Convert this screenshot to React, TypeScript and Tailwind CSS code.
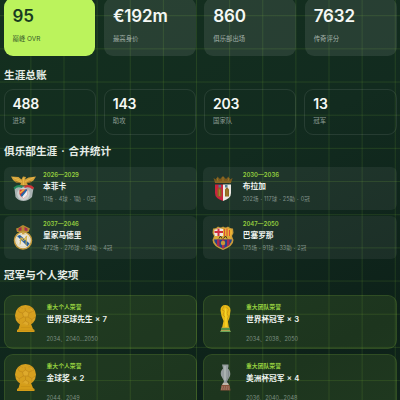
import type { ReactNode } from "react";

const zh = "font-['Inter','Noto_Sans_CJK_SC',sans-serif]";

function Benfica() {
  return (
    <svg viewBox="0 0 50 50" className="h-[25px] w-[25px]">
      <path d="M0 1 L15 2 L21 7 L24 1 L30 2 L28 7 L35 3 L50 1 L45 9 L38 13 L32 14 L34 19 L18 19 L20 14 L10 13 L4 8Z" fill="#d3a13a" />
      <path d="M4 3 L17 8 L22 12 M46 3 L34 8 L28 12 M25 4 L25 18 M11 9 L20 12" stroke="#e6b64a" strokeWidth="2" fill="none" />
      <path d="M9 11 L19 14 M40 11 L31 14" stroke="#80591e" strokeWidth="1.5" />
      <path d="M7 25 Q13 18 25 21 Q39 17 45 24 L42 42 Q34 50 25 50 Q15 50 9 42Z" fill="#a9b2b2" />
      <path d="M5 23 Q15 15 24 20 L22 24 Q13 20 7 27Z" fill="#25885a" />
      <path d="M27 20 Q38 15 46 23 L43 27 Q36 20 27 24Z" fill="#cc3338" />
      <circle cx="25" cy="36" r="12.5" fill="#cdd0cf" />
      <path d="M17 27 H33 V36 Q32 41 25 45 Q18 41 17 36Z" fill="#d8383b" />
      <path d="M33 27 V36 Q32 41 25 45 L21 41Z" fill="#eee" />
      <path d="M19 38 L30 26 L33 28 L22 42Z" fill="#2567a4" />
      <path d="M18 34 L26 27" stroke="#e9b73b" strokeWidth="3" />
    </svg>
  );
}

function Braga() {
  return (
    <svg viewBox="0 0 40 50" className="h-[25px] w-5">
      <path d="M1 4 L6 7 L9 1 L14 6 L20 0 L26 6 L31 1 L34 7 L39 4 L36 14 H4Z" fill="#79591d" />
      <path d="M4 12 H36 M8 4 L10 10 M20 2 V10 M32 4 L30 10" stroke="#987427" strokeWidth="2" />
      <path d="M4 17 H20 V50 Q4 45 4 34Z" fill="#cb233d" />
      <path d="M20 17 H36 V34 Q36 45 20 50Z" fill="#eceae4" />
      <path d="M9 27 L13 22 L17 27 V41 H9Z M24 27 L28 22 L32 27 V41 H24Z" fill="#8e6820" />
      <path d="M13 27 V40 M28 27 V40" stroke="#a98232" strokeWidth="2" />
      <path d="M11 18 h5 v5 h-5z M24 18 h5 v5 h-5z" fill="#517d91" />
    </svg>
  );
}

function Madrid() {
  return (
    <svg viewBox="0 0 40 50" className="h-[25px] w-5">
      <path d="M8 14 L6 7 L12 5 L16 2 L20 0 L24 2 L30 5 L34 7 L31 14Z" fill="#b48a30" />
      <path d="M11 7 L17 4 V11 L11 12Z M23 4 L29 7 V12 L23 11Z" fill="#a72c4f" />
      <circle cx="20" cy="31" r="17" fill="#e9e5d8" stroke="#c49b3d" strokeWidth="3" />
      <circle cx="20" cy="31" r="13" fill="none" stroke="#dcc88d" strokeWidth="1" />
      <path d="M8 22 L14 20 L33 37 L29 43Z" fill="#265f9e" />
      <path d="M14 39 L16 25 L21 32 L27 22 L26 40 M13 31 Q21 23 28 31" fill="none" stroke="#d5b345" strokeWidth="2" />
      <path d="M18 17 H23" stroke="#d1a33b" strokeWidth="3" />
    </svg>
  );
}

function Barcelona() {
  return (
    <svg viewBox="0 0 44 48" className="h-6 w-[22px]">
      <path d="M2 5 Q8 6 12 1 Q18 5 22 1 Q27 5 32 1 Q37 6 42 5 L43 14 L40 20 L43 28 Q43 40 22 48 Q1 40 1 28 L4 20 L1 14Z" fill="#c99b39" />
      <path d="M5 7 Q9 8 13 4 L22 6 V20 H6 L4 14Z" fill="#eee6df" />
      <path d="M13 5 V20 M5 12 H22" stroke="#d02f3f" strokeWidth="4" />
      <path d="M22 6 L31 4 Q35 8 39 7 L40 14 L38 20 H22Z" fill="#efbb32" />
      <path d="M25 6 V20 M30 5 V20 M35 8 V20" stroke="#d5503b" strokeWidth="2.4" />
      <path d="M5 20 H39 V26 H4Z" fill="#d9a936" />
      <path d="M14 25 L17 20 L20 25 M23 25 L27 20 L30 25" stroke="#343320" strokeWidth="2" fill="none" />
      <path d="M4 27 H40 Q39 38 22 45 Q5 38 4 27Z" fill="#25438c" />
      <path d="M10 27 H15 V42 L10 39Z M20 27 H25 V44 L22 45 L20 44Z M30 27 H35 V38 L30 41Z" fill="#ae294c" />
      <circle cx="22" cy="34" r="4.5" fill="#c7993a" />
    </svg>
  );
}

function GoldenBall() {
  return (
    <svg viewBox="0 0 42 54" className="h-[27px] w-[21px]">
      <path d="M10 38 H32 L36 48 L39 50 V54 H4 V50 L7 48Z" fill="#d59d18" />
      <path d="M5 51 H38 M12 45 H31" stroke="#c08a15" strokeWidth="1" />
      <circle cx="21" cy="21" r="21" fill="#d6a01f" />
      <path d="M15 16 L21 12 L28 16 L26 24 H17Z M6 9 L12 5 L15 8 M27 6 L34 6 L38 14 M3 25 L8 29 L8 36 M34 36 L34 29 L40 24 M15 36 L21 32 L28 36 L26 41" fill="#deaa2c" stroke="#ba8318" strokeWidth="1.2" />
      <path d="M15 16 L8 14 L6 9 M21 12 L20 6 M28 16 L35 13 M26 24 L34 29 M17 24 L8 29 M21 32 V25" stroke="#ba8318" strokeWidth="1.2" fill="none" />
    </svg>
  );
}

function WorldCup() {
  return (
    <svg viewBox="0 0 22 54" className="h-[27px] w-[11px]">
      <path d="M1 11 Q1 0 11 0 Q21 1 21 11 L19 25 L16 33 L18 46 H4 L7 32 L3 22Z" fill="#e8bb16" />
      <path d="M8 2 L4 10 L9 12 L6 20 L13 27 M13 4 L17 9 L14 17 L17 23 L12 34" stroke="#c59512" strokeWidth="1.5" fill="none" />
      <path d="M11 7 L11 15 L12 26 V44" stroke="#f6d629" strokeWidth="3" fill="none" />
      <path d="M3 45 H19 L21 54 H1Z" fill="#b0a551" />
      <path d="M2 48 H20" stroke="#358a46" strokeWidth="3" />
      <path d="M1 53 H21" stroke="#69a75a" strokeWidth="2" />
    </svg>
  );
}

function CopaCup() {
  return (
    <svg viewBox="0 0 22 54" className="h-[27px] w-[11px]">
      <path d="M4 1 H17 V5 L16 9 Q22 14 20 24 L14 35 L16 40 H6 L8 34 L2 23 Q0 14 6 9Z" fill="#959d9e" />
      <path d="M10 4 V33" stroke="#aab2b1" strokeWidth="4" />
      <path d="M17 13 V25 L12 36" stroke="#7c8687" strokeWidth="1.5" fill="none" />
      <path d="M6 38 H16 L18 42 H4Z" fill="#c0b6a8" />
      <path d="M3 42 H19 L21 53 H1Z" fill="#88523b" />
      <path d="M3 46 H19 M2 50 H20" stroke="#b8a293" strokeWidth="1.5" strokeDasharray="3 1.5" />
    </svg>
  );
}

const peaks = [
  { value: "95", label: "巅峰 OVR", active: true },
  { value: "€192m", label: "最高身价" },
  { value: "860", label: "俱乐部出场" },
  { value: "7632", label: "传奇评分" },
];

const totals = [
  { value: "488", label: "进球" },
  { value: "143", label: "助攻" },
  { value: "203", label: "国家队" },
  { value: "13", label: "冠军" },
];

const clubs = [
  { years: "2026—2029", name: "本菲卡", stats: "11场 · 4球 · 1助 · 0冠", crest: <Benfica /> },
  { years: "2030—2036", name: "布拉加", stats: "202场 · 117球 · 25助 · 0冠", crest: <Braga /> },
  { years: "2037—2046", name: "皇家马德里", stats: "472场 · 276球 · 84助 · 4冠", crest: <Madrid /> },
  { years: "2047—2050", name: "巴塞罗那", stats: "175场 · 91球 · 33助 · 2冠", crest: <Barcelona /> },
];

const awards = [
  { kind: "重大个人荣誉", name: "世界足球先生 × 7", years: "2034、2040…2050", icon: <GoldenBall /> },
  { kind: "重大团队荣誉", name: "世界杯冠军 × 3", years: "2034、2038、2050", icon: <WorldCup /> },
  { kind: "重大个人荣誉", name: "金球奖 × 2", years: "2044、2049", icon: <GoldenBall /> },
  { kind: "重大团队荣誉", name: "美洲杯冠军 × 4", years: "2036、2040…2048", icon: <CopaCup /> },
];

function Title({ children }: { children: ReactNode }) {
  return <h2 className="pl-[0.5px] text-[10.65px] leading-[16px] font-semibold text-[#e6ede8] [word-spacing:1.3px]">{children}</h2>;
}

export default function App() {
  return (
    <div className={`${zh} h-[400px] w-[400px] overflow-hidden whitespace-nowrap bg-[linear-gradient(155deg,#14301f_0%,#122b1f_45%,#0d2119_85%,#0f241a_100%)] text-[#f5f8f5]`}>
      <div className="flex h-full flex-col bg-[linear-gradient(90deg,rgba(120,180,50,0.17)_1.2px,transparent_1.2px),linear-gradient(rgba(120,180,50,0.17)_1.2px,transparent_1.2px)] bg-[length:33.14px_33.18px] bg-[position:30.4px_15.2px] px-[3.5px]">
        <div className="-mt-[2px] grid shrink-0 grid-cols-4 gap-[8.5px]">
          {peaks.map((p) => (
            <div
              key={p.label}
              className={`h-[58px] rounded-[9px] pt-[9px] pl-[9px] ${p.active ? "bg-[#bbf35c] text-[#183a21]" : "bg-white/9"}`}
            >
              <div className="text-[17px] leading-[19px] font-semibold tracking-[-0.15px]">{p.value}</div>
              <div className={`mt-[8px] text-[6.4px] leading-[10px] ${p.active ? "text-[#34572a]" : "text-[#a5b2ab]"}`}>{p.label}</div>
            </div>
          ))}
        </div>
        <div className="mt-[12px]">
          <Title>生涯总账</Title>
        </div>
        <div className="mt-[5px] grid shrink-0 grid-cols-4 gap-[8px]">
          {totals.map((t) => (
            <div key={t.label} className="h-[46px] rounded-[9px] border border-white/9 pt-[6px] pl-[8px]">
              <div className="text-[14px] leading-[15px] font-semibold tracking-[-0.25px]">{t.value}</div>
              <div className="mt-[5px] text-[6.4px] leading-[10px] text-[#8d9d94]">{t.label}</div>
            </div>
          ))}
        </div>
        <div className="mt-[9px]">
          <Title>俱乐部生涯 · 合并统计</Title>
        </div>
        <div className="mt-[7px] grid shrink-0 grid-cols-2 gap-x-[6.5px] gap-y-[6px]">
          {clubs.map((c) => (
            <div key={c.name} className="flex h-[43px] rounded-[6px] bg-white/6">
              <div className="flex w-[39.5px] items-center justify-center">{c.crest}</div>
              <div className="pt-[4px]">
                <div className="text-[5.9px] leading-[8px] font-semibold text-[#95cf3f]">{c.years}</div>
                <div className="mt-[1px] text-[7.7px] leading-[13px] font-bold text-[#eef3ef]">{c.name}</div>
                <div className="mt-[2px] text-[5.5px] leading-[8px] text-[#83938b] [word-spacing:0.5px]">{c.stats}</div>
              </div>
            </div>
          ))}
        </div>
        <div className="mt-[9px]">
          <Title>冠军与个人奖项</Title>
        </div>
        <div className="mt-[11px] grid shrink-0 grid-cols-2 gap-x-[6px] gap-y-[5px]">
          {awards.map((a) => (
            <div key={a.name} className="flex h-[54px] rounded-[9px] border border-[#a0df46]/14 bg-[#a0df46]/11">
              <div className="flex w-[42px] justify-center pt-[9px]">{a.icon}</div>
              <div className="pt-[6px]">
                <div className="text-[5.85px] leading-[9px] font-semibold text-[#95cf3f]">{a.kind}</div>
                <div className="mt-[2px] text-[7.7px] leading-[13px] font-semibold text-[#eef3ef] [word-spacing:0.4px]">{a.name}</div>
                <div className="mt-[9px] text-[5.5px] leading-[8px] text-[#7c8e80]">{a.years}</div>
              </div>
            </div>
          ))}
        </div>
      </div>
    </div>
  );
}
